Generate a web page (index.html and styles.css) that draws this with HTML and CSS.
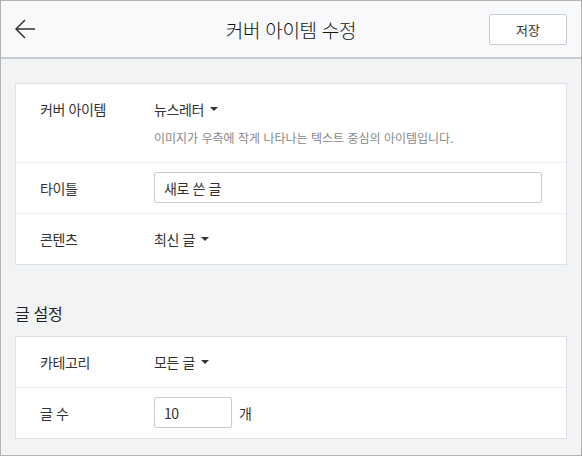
FILE: index.html
```html
<!DOCTYPE html>
<html lang="ko">
<head>
  <meta charset="UTF-8" />
  <meta name="viewport" content="width=device-width, initial-scale=1.0"/>
  <title>커버 아이템 수정</title>
  <link rel="stylesheet" href="styles.css">
</head>
<body>
  <div class="app">
    <header class="topbar">
      <button class="back" aria-label="뒤로">
        <svg width="20" height="20" viewBox="0 0 20 20">
          <path d="M10 1 L1 10 L10 19 M1 10 H20" fill="none" stroke="#333" stroke-width="1.5"/>
        </svg>
      </button>
      <h1>커버 아이템 수정</h1>
      <button class="save">저장</button>
    </header>

    <main>
      <section class="card">
        <div class="row">
          <span class="label">커버 아이템</span>
          <div>
            <span class="select">뉴스레터 <i class="caret"></i></span>
            <p class="desc">이미지가 우측에 작게 나타나는 텍스트 중심의 아이템입니다.</p>
          </div>
        </div>
        <div class="row row-input">
          <span class="label">타이틀</span>
          <input type="text" class="text" value="새로 쓴 글">
        </div>
        <div class="row">
          <span class="label">콘텐츠</span>
          <span class="select">최신 글 <i class="caret"></i></span>
        </div>
      </section>

      <h2>글 설정</h2>

      <section class="card">
        <div class="row">
          <span class="label">카테고리</span>
          <span class="select">모든 글 <i class="caret"></i></span>
        </div>
        <div class="row row-input">
          <span class="label">글 수</span>
          <div class="count">
            <input type="text" class="text small" value="10">
            <span>개</span>
          </div>
        </div>
      </section>
    </main>
  </div>
</body>
</html>
```

FILE: styles.css
```css
body {
  margin: 0;
  font-family: "Noto Sans CJK KR", "Noto Sans", sans-serif;
  color: #333;
}
.app {
  height: 456px;
  box-sizing: border-box;
  border: 1px solid #b3b3b3;
  background: #f2f3f5;
  overflow: hidden;
}
.topbar {
  height: 56px;
  background: #f8f9fb;
  border-bottom: 2px solid #c6ccd5;
  display: flex;
  align-items: center;
  justify-content: space-between;
  padding: 0 14px 0 14px;
  position: relative;
}
.back {
  background: none;
  border: none;
  padding: 0;
  width: 20px;
  height: 20px;
  cursor: pointer;
}
.topbar h1 {
  position: absolute;
  left: 0;
  right: 0;
  text-align: center;
  margin: 0;
  font-size: 19px;
  font-weight: 300;
  color: #111;
  letter-spacing: -0.3px;
  pointer-events: none;
}
.save {
  width: 78px;
  height: 31px;
  background: #fff;
  border: 1px solid #c9cdd4;
  border-radius: 2px;
  font-family: inherit;
  font-size: 13px;
  color: #333;
  cursor: pointer;
}
main {
  padding: 24px 14px 0;
}
.card {
  background: #fff;
  border: 1px solid #dde1e7;
}
.row {
  display: grid;
  grid-template-columns: 114px 1fr;
  align-items: start;
  padding: 15px 24px;
  font-size: 14px;
  line-height: 20px;
  letter-spacing: -0.4px;
}
.row + .row {
  border-top: 1px solid #eceef1;
}
.row-input {
  padding: 9px 24px 10px;
  align-items: center;
}
.label {
  color: #333;
}
.select {
  display: inline-flex;
  align-items: center;
  gap: 6px;
  color: #333;
}
.caret {
  width: 0;
  height: 0;
  border-left: 4px solid transparent;
  border-right: 4px solid transparent;
  border-top: 4px solid #333;
}
.desc {
  margin: 10px 0 0;
  font-size: 12px;
  line-height: 18px;
  color: #888;
  letter-spacing: 0;
}
.text {
  box-sizing: border-box;
  width: 100%;
  height: 31px;
  border: 1px solid #c8ccd4;
  border-radius: 2px;
  padding: 0 9px;
  font-family: inherit;
  font-size: 14px;
  color: #333;
  letter-spacing: -0.4px;
}
.count {
  display: flex;
  align-items: center;
  gap: 7px;
}
.text.small {
  width: 78px;
}
h2 {
  margin: 38px 0 13px;
  font-size: 16px;
  line-height: 20px;
  font-weight: 400;
  color: #222;
  letter-spacing: -0.3px;
}
```
